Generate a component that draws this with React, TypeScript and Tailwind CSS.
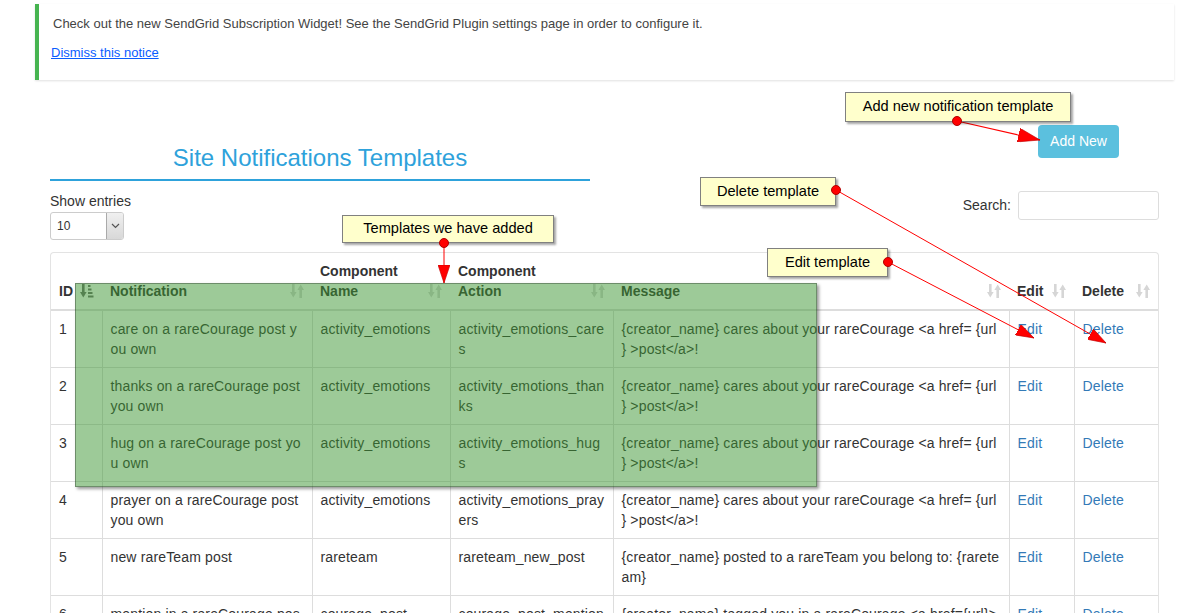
import React from 'react';

const rows = [
  {
    id: '1',
    notification: 'care on a rareCourage post you own',
    name: 'activity_emotions',
    action: 'activity_emotions_cares',
    message: '{creator_name} cares about your rareCourage <a href= {url} >post</a>!',
  },
  {
    id: '2',
    notification: 'thanks on a rareCourage post you own',
    name: 'activity_emotions',
    action: 'activity_emotions_thanks',
    message: '{creator_name} cares about your rareCourage <a href= {url} >post</a>!',
  },
  {
    id: '3',
    notification: 'hug on a rareCourage post you own',
    name: 'activity_emotions',
    action: 'activity_emotions_hugs',
    message: '{creator_name} cares about your rareCourage <a href= {url} >post</a>!',
  },
  {
    id: '4',
    notification: 'prayer on a rareCourage post you own',
    name: 'activity_emotions',
    action: 'activity_emotions_prayers',
    message: '{creator_name} cares about your rareCourage <a href= {url} >post</a>!',
  },
  {
    id: '5',
    notification: 'new rareTeam post',
    name: 'rareteam',
    action: 'rareteam_new_post',
    message: '{creator_name} posted to a rareTeam you belong to: {rareteam}',
  },
  {
    id: '6',
    notification: 'mention in a rareCourage post',
    name: 'courage_post',
    action: 'courage_post_mention',
    message: '{creator_name} tagged you in a rareCourage <a href={url}>post</a>',
  },
];

const Message = ({ text }: { text: string }) => {
  const i = text.indexOf('{url} ');
  if (i < 0) return <>{text}</>;
  return (
    <>
      {text.slice(0, i + 4)}
      <wbr />
      {text.slice(i + 4)}
    </>
  );
};

// light "unsorted" icon for the column headers
const SortIcon = () => (
  <svg width="14" height="14" viewBox="0 0 14 14" fill="#d6d6d6" className="absolute right-[8px] bottom-[11px]">
    <rect x="2" y="0" width="2.6" height="9" />
    <path d="M0 8h6.6L3.3 13.5z" />
    <rect x="9.4" y="5" width="2.6" height="9" />
    <path d="M7.4 6h6.6L10.7 0.5z" />
  </svg>
);

// "sorted ascending" icon in the ID header
const SortedIcon = () => (
  <svg width="14" height="14" viewBox="0 0 14 14" fill="#6f6f6f" className="absolute right-[8px] bottom-[11px]">
    <rect x="2" y="0" width="2.6" height="9" />
    <path d="M0 8h6.6L3.3 13.5z" />
    <rect x="8" y="1" width="2.5" height="2" />
    <rect x="8" y="4.5" width="3.5" height="2" />
    <rect x="8" y="8" width="4.5" height="2" />
    <rect x="8" y="11.5" width="5.5" height="2" />
  </svg>
);

const Callout = ({ text, className }: { text: string; className: string }) => (
  <div
    className={`absolute flex items-center justify-center border border-[#808080] bg-[#ffffcc] text-[14.6px] text-black shadow-[2px_2px_2px_rgba(0,0,0,0.35)] ${className}`}
  >
    {text}
  </div>
);

const App = () => {
  const th = 'relative border-b-2 border-[#dddddd] px-[8px] pt-[8px] pb-[8px] text-left align-bottom font-bold leading-[20px]';
  const td = 'border-l border-t border-[#dddddd] p-[8px] align-top leading-[20px] tracking-[0.15px] break-all';

  return (
    <div className="relative h-[613px] w-[1178px] overflow-hidden bg-white font-['Liberation_Sans',Arial,sans-serif] text-[14px] text-[#333333]">
      {/* Notice */}
      <div className="ml-[35px] mr-[4px] mt-[4px] h-[76px] border-l-4 border-[#46b450] bg-white pl-[14px] shadow-[0_1px_2px_rgba(0,0,0,0.12)]">
        <p className="pt-[11px] text-[13px] leading-[18px] text-[#444444]">
          Check out the new SendGrid Subscription Widget! See the SendGrid Plugin settings page in order to configure it.
        </p>
        <p className="mt-[11px] text-[13px] leading-[18px]">
          <a href="#" className="-ml-[2px] text-[#0a5cff] underline">Dismiss this notice</a>
        </p>
      </div>

      <div className="pl-[50px] pr-[19px]">
        {/* Title + Add New */}
        <div className="mt-[45px] flex items-start justify-between">
          <div className="w-[540px] pt-[19px]">
            <h2 className="text-center text-[24px] leading-[28px] text-[#2ea2db]">Site Notifications Templates</h2>
            <div className="mt-[7px] h-[2px] bg-[#2ea2db]" />
          </div>
          <button className="mr-[40px] h-[33px] w-[81px] rounded-[4px] bg-[#5bc0de] text-[14px] text-white">Add New</button>
        </div>

        {/* Show entries / Search */}
        <div className="flex items-start justify-between pt-[10px]">
          <div>
            <div className="leading-[20px]">Show entries</div>
            <div className="mt-[1px] flex h-[28px] w-[74px] overflow-hidden rounded-[3px] border border-[#cccccc] bg-white">
              <span className="flex-1 pl-[6px] text-[12px] leading-[26px]">10</span>
              <span className="flex w-[17px] items-center justify-center border-l border-[#aaaaaa] bg-gradient-to-b from-[#f0f0f0] to-[#d8d8d8]">
                <svg width="9" height="6" viewBox="0 0 9 6" fill="none" stroke="#555" strokeWidth="1.2">
                  <path d="M1 1l3.5 3.5L8 1" />
                </svg>
              </span>
            </div>
          </div>
          <div className="flex items-center gap-[7px]">
            <span>Search:</span>
            <input className="h-[29px] w-[141px] rounded-[3px] border border-[#dddddd] bg-white outline-none" />
          </div>
        </div>

        {/* Table */}
        <div className="mt-[12px] overflow-hidden rounded-t-[4px] border-x border-t border-[#e3e3e3]">
          <table className="w-full table-fixed border-collapse">
            <colgroup>
              <col className="w-[51px]" />
              <col className="w-[210px]" />
              <col className="w-[138px]" />
              <col className="w-[163px]" />
              <col className="w-[396px]" />
              <col className="w-[65px]" />
              <col />
            </colgroup>
            <thead>
              <tr>
                <th className={th}>ID<SortedIcon /></th>
                <th className={th}>Notification<SortIcon /></th>
                <th className={th}>Component<br />Name<SortIcon /></th>
                <th className={th}>Component<br />Action<SortIcon /></th>
                <th className={th}>Message<SortIcon /></th>
                <th className={th}>Edit<SortIcon /></th>
                <th className={th}>Delete<SortIcon /></th>
              </tr>
            </thead>
            <tbody>
              {rows.map((r) => (
                <tr key={r.id}>
                  <td className={`${td} border-l-0`}>{r.id}</td>
                  <td className={td}>{r.notification}</td>
                  <td className={td}>{r.name}</td>
                  <td className={td}>{r.action}</td>
                  <td className={td}><Message text={r.message} /></td>
                  <td className={td}><a href="#" className="text-[#337ab7]">Edit</a></td>
                  <td className={td}><a href="#" className="text-[#337ab7]">Delete</a></td>
                </tr>
              ))}
            </tbody>
          </table>
        </div>
      </div>

      {/* Green highlight over the added templates */}
      <div className="absolute left-[75px] top-[283px] h-[204px] w-[742px] border border-[rgba(0,0,0,0.3)] bg-[rgba(60,150,50,0.5)] shadow-[2px_2px_3px_rgba(0,0,0,0.4)]" />

      {/* Annotation lines */}
      <svg className="pointer-events-none absolute left-0 top-0" width="1178" height="613">
        <defs>
          <marker id="bigHead" markerUnits="userSpaceOnUse" markerWidth="22" markerHeight="14" refX="22" refY="7" orient="auto">
            <path d="M0 0L22 7L0 14z" fill="#ff0000" stroke="#c00000" strokeWidth="0.6" />
          </marker>
          <marker id="head" markerUnits="userSpaceOnUse" markerWidth="18" markerHeight="12" refX="18" refY="6" orient="auto">
            <path d="M0 0L18 6L0 12z" fill="#ff0000" stroke="#c00000" strokeWidth="0.6" />
          </marker>
        </defs>
        <line x1="957" y1="121" x2="1040" y2="140" stroke="#ff0000" strokeWidth="1.2" markerEnd="url(#bigHead)" />
        <line x1="836" y1="190" x2="1106" y2="343" stroke="#ff0000" strokeWidth="1" markerEnd="url(#head)" />
        <line x1="444" y1="243" x2="444" y2="283" stroke="#ff0000" strokeWidth="1" markerEnd="url(#head)" />
        <line x1="888" y1="262" x2="1034" y2="338" stroke="#ff0000" strokeWidth="1" markerEnd="url(#head)" />
      </svg>

      {/* Callouts */}
      <Callout text="Add new notification template" className="left-[845px] top-[92px] h-[30px] w-[226px]" />
      <Callout text="Delete template" className="left-[700px] top-[177px] h-[29px] w-[136px]" />
      <Callout text="Templates we have added" className="left-[342px] top-[215px] h-[28px] w-[212px]" />
      <Callout text="Edit template" className="left-[767px] top-[248px] h-[29px] w-[121px]" />

      {/* Dots at the line starts */}
      <svg className="pointer-events-none absolute left-0 top-0" width="1178" height="613">
        <circle cx="957" cy="121" r="4.5" fill="#ff0000" stroke="#b00000" />
        <circle cx="836" cy="190" r="4.5" fill="#ff0000" stroke="#b00000" />
        <circle cx="444" cy="243" r="4.5" fill="#ff0000" stroke="#b00000" />
        <circle cx="888" cy="262" r="4.5" fill="#ff0000" stroke="#b00000" />
      </svg>
    </div>
  );
};

export default App;
